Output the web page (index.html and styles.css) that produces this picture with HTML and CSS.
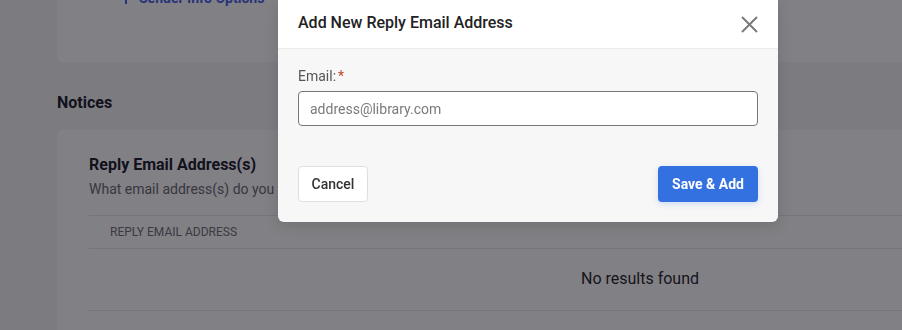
FILE: index.html
```html
<!DOCTYPE html>
<html>
<head>
<meta charset="utf-8">
<link rel="stylesheet" href="styles.css">
</head>
<body>
<div class="page">
  <section class="card card-top">
    <div class="link-row"><span class="bar"></span><a class="link">Sender Info Options</a></div>
  </section>
  <h2 class="section-title">Notices</h2>
  <section class="card card-notices">
    <h3 class="card-title">Reply Email Address(s)</h3>
    <p class="card-sub">What email address(s) do you want patrons to reply to?</p>
    <div class="table">
      <div class="thead">Reply Email Address</div>
      <div class="tempty">No results found</div>
    </div>
  </section>
</div>
<div class="overlay"></div>
<div class="modal">
  <div class="modal-head">
    <h1 class="modal-title">Add New Reply Email Address</h1>
    <svg class="close" width="17" height="17" viewBox="0 0 17 17"><path d="M1 1L16 16M16 1L1 16" stroke="#7a7a7a" stroke-width="2" fill="none"/></svg>
  </div>
  <div class="modal-body">
    <label class="label">Email:<span class="req">*</span></label>
    <div class="input"><span class="placeholder">address@library.com</span></div>
    <div class="actions">
      <button class="btn btn-cancel">Cancel</button>
      <button class="btn btn-primary">Save &amp; Add</button>
    </div>
  </div>
</div>
</body>
</html>
```
FILE: styles.css
```css
html, body {
  margin: 0;
  padding: 0;
  overflow: hidden;
  background: #f4f5f7;
  font-family: Roboto, "Noto Sans", sans-serif;
}
.page {
  width: 1300px;
  margin-top: -40px;
  padding-left: 57px;
}
.card {
  background: #fff;
  border-radius: 6px;
  width: 1166px;
  box-sizing: border-box;
}
.card-top {
  padding: 28px 0 54px 68px;
}
.link-row {
  display: flex;
  align-items: center;
  height: 20px;
  gap: 12px;
}
.bar {
  width: 2px;
  height: 12px;
  background: #4a66e8;
}
.link {
  color: #4a66e8;
  font-size: 14px;
  font-weight: 700;
}
.section-title {
  margin: 31px 0 17px 0;
  font-size: 16px;
  line-height: 20px;
  font-weight: 700;
  color: #1f2230;
}
.card-notices {
  padding: 25px 32px 20px 32px;
  height: 260px;
}
.card-title {
  margin: 0;
  font-size: 16px;
  line-height: 20px;
  font-weight: 700;
  color: #1f2230;
}
.card-sub {
  margin: 4px 0 0 0;
  font-size: 14px;
  line-height: 20px;
  color: #6b6d78;
}
.table {
  margin-top: 16px;
  width: 1102px;
  border-top: 1px solid #e9e9ee;
}
.thead {
  height: 32px;
  display: flex;
  align-items: center;
  padding-left: 21px;
  text-transform: uppercase;
  font-size: 12px;
  color: #727480;
  border-bottom: 1px solid #e9e9ee;
}
.tempty {
  height: 59px;
  padding-bottom: 2px;
  display: flex;
  align-items: center;
  justify-content: center;
  font-size: 16px;
  color: #2a2a30;
  border-bottom: 1px solid #e9e9ee;
}
.overlay {
  position: fixed;
  inset: 0;
  background: rgba(3, 2, 9, 0.5);
}
.modal {
  position: fixed;
  left: 278px;
  top: 0;
  width: 500px;
  border-radius: 0 0 6px 6px;
  overflow: hidden;
  background: #f7f7f7;
  box-shadow: 0 4px 14px rgba(0, 0, 0, 0.12);
}
.modal-head {
  box-sizing: border-box;
  padding: 0 20px 3px 20px;
  height: 49px;
  background: #fff;
  border-bottom: 1px solid #ececec;
  display: flex;
  align-items: center;
  justify-content: space-between;
}
.modal-title {
  margin: 0;
  font-size: 16px;
  font-weight: 500;
  color: #222;
}
.close {
  display: block;
  margin-top: 3px;
}
.modal-body {
  padding: 17px 20px 20px 20px;
}
.label {
  display: block;
  font-size: 14px;
  line-height: 20px;
  color: #555;
}
.req {
  color: #c4432f;
  margin-left: 2px;
}
.input {
  margin-top: 5px;
  height: 35px;
  box-sizing: border-box;
  background: #fff;
  border: 1px solid #767676;
  border-radius: 4px;
  display: flex;
  align-items: center;
  padding-left: 11px;
}
.placeholder {
  font-size: 14px;
  color: #7a7a7a;
}
.actions {
  margin-top: 40px;
  display: flex;
  justify-content: space-between;
}
.btn {
  height: 36px;
  border-radius: 4px;
  font-family: Roboto, "Noto Sans", sans-serif;
  font-size: 14px;
  cursor: pointer;
}
.btn-cancel {
  width: 70px;
  background: #fff;
  border: 1px solid #dedede;
  color: #333;
  font-weight: 500;
}
.btn-primary {
  width: 100px;
  background: #3471e0;
  border: none;
  color: #fff;
  font-weight: 700;
  box-shadow: 0 2px 6px rgba(52, 113, 224, 0.2);
}
```
